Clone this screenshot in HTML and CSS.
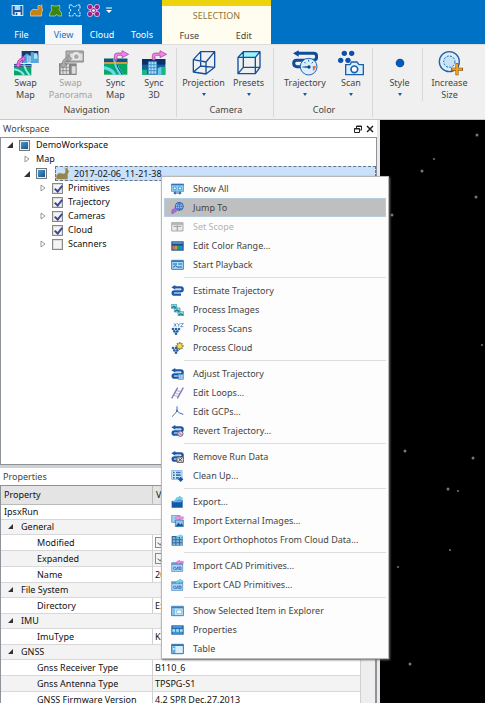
FILE: index.html
```html
<!DOCTYPE html>
<html lang="en">
<head>
<meta charset="utf-8">
<title>DemoWorkspace</title>
<link rel="stylesheet" href="styles.css">
</head>
<body>
<svg class="defs" aria-hidden="true">
  <symbol id="route" viewBox="0 0 39 36">
    <path d="M9 7H29Q35 7 35 13T29 19H10Q5 19 5 24T10 29H30" fill="none" stroke="#1c56a8" stroke-width="7"/>
    <path d="M13 0v14L1 7z" fill="#1c56a8"/>
    <path d="M12 13h16" stroke="#a9d4f3" stroke-width="3"/>
  </symbol>
  <symbol id="dots" viewBox="0 0 39 36">
    <g fill="#2d62ac"><circle cx="6" cy="18" r="4"/><circle cx="15" cy="18" r="4"/><circle cx="24" cy="18" r="4"/><circle cx="10" cy="25" r="4"/><circle cx="19" cy="25" r="4"/><circle cx="15" cy="32" r="4"/></g>
  </symbol>
  <symbol id="cad" viewBox="0 0 39 36">
    <path d="M2 8h33v27H2z" fill="#a9d4f3" stroke="#4a84bd" stroke-width="2"/>
    <path d="M2 12h33" stroke="#4a84bd" stroke-width="4"/>
    <circle cx="11" cy="25" r="4" fill="none" stroke="#2058a8" stroke-width="2"/>
    <path d="M15 30l6-10v10M25 21h5v8h-5z" fill="none" stroke="#2058a8" stroke-width="2"/>
  </symbol>
  <symbol id="tri" viewBox="0 0 6 6"><path d="M6 0v6H0z" fill="#333"/></symbol>
  <symbol id="closed" viewBox="0 0 6 8"><path d="M1 1l4 3-4 3z" fill="#fff" stroke="#999"/></symbol>
</svg>

<header class="top">
  <div class="window-tabs">
    <div class="quick">
      <button aria-label="Save"><svg viewBox="0 0 39 39"><path d="M2 3h35v33H6l-4-4z" fill="#d9eafa"/><path d="M5 6h29v27H8l-3-3z" fill="#1757a8"/><path d="M11 6h17v12H11z" fill="#a8d7f7"/><path d="M11 24h18v9H11z" fill="#eaf5ff"/><path d="M14 26h5v7h-5z" fill="#1757a8"/></svg></button>
      <button aria-label="Open run"><svg viewBox="0 0 39 39"><path d="M1 36V23l8-7 12 1 5-3-3-7 4-4 4 4 4-5 1 9 2 7-3 7v11z" fill="#c68112" stroke="#ffe0a1" stroke-width="2"/></svg></button>
      <button aria-label="Open cloud"><svg viewBox="0 0 39 39"><path d="M8 3l6 3h11l6-3 2 9-3 5 8 10v9h-10l-4-5-6 5H1l2-9 6-9-3-6z" fill="#3b8510" stroke="#c4e6ad" stroke-width="2"/></svg></button>
      <button aria-label="Trace"><svg viewBox="0 0 39 39"><path d="M4 3h8l4 5h7l4-5h9v10l-5 5 5 8v10h-10l-6-9-6 9H4V26l5-8-5-5z" fill="none" stroke="#d8f2ff" stroke-width="3" stroke-dasharray="8 2"/></svg></button>
      <button aria-label="Targets"><svg viewBox="0 0 39 39"><path d="M10 10h19v19H10z" fill="#8f267f" stroke="#f2c6ed" stroke-width="3"/><g fill="#9a208b" stroke="#f8dff5" stroke-width="2"><circle cx="9" cy="9" r="8"/><circle cx="30" cy="9" r="8"/><circle cx="9" cy="30" r="8"/><circle cx="30" cy="30" r="8"/></g><circle cx="19.500" cy="19.500" r="4" fill="#fff"/></svg></button>
      <button class="more" aria-label="More commands"><svg viewBox="0 0 6 7"><path d="M0 1h6" stroke="#fff"/><path d="M0 3h6L3 6z" fill="#fff"/></svg></button>
    </div>
    <nav class="tabs">
      <a href="#file" class="tab file">File</a><a href="#view" class="tab view active">View</a><a href="#cloud" class="tab">Cloud</a><a href="#tools" class="tab">Tools</a>
    </nav>
  </div>
  <div class="context">
    <div class="context-title">SELECTION</div>
    <nav class="tabs"><a href="#fuse" class="tab">Fuse</a><a href="#edit" class="tab">Edit</a></nav>
  </div>
</header>

<section class="ribbon">
  <div class="group first">
    <div class="commands">
      <button class="command w-m"><svg viewBox="0 0 78 78"><path d="M26 3h50v36H26z" fill="#173a70"/><path d="M28 22l14-12 11 10V7h10v15l13-8v25H28z" fill="#53a9dc"/><path d="M43 17h10v22H43zm20-7h10v16H63z" fill="#b2e2fa"/><path d="M45 21h5m-5 6h5m-5 6h5" stroke="#2866a6" stroke-width="2"/><path d="M3 42h52v34H3z" fill="#07a765"/><path d="M3 42h52v9H3z" fill="#17508f"/><path d="M3 58q22 3 30 18M33 43q3 17 17 33" stroke="#8fe4f5" stroke-width="6" fill="none"/><path d="M3 47h52" stroke="#f1a423" stroke-width="3"/><path d="M12 43q2-17 16-19v-7l10 10-10 10v-7q-7 1-8 13h6L15 53 6 43z" fill="#ed6dee" stroke="#7f2a91" stroke-width="2"/></svg><span>Swap<br>Map</span></button>
      <button class="command w-m" disabled><svg viewBox="0 0 78 78"><path d="M24 3h52v33H24z" fill="#b6b6b6" stroke="#888" stroke-width="3"/><path d="M34 9h10l4-5h13l4 5h10v24H34z" fill="#ddd" stroke="#888" stroke-width="2"/><circle cx="55" cy="20" r="9" fill="#aaa" stroke="#fff" stroke-width="3"/><path d="M3 40h53v35H3z" fill="#858585"/><path d="M8 43h25v29H8zm33 6h12v22H41z" fill="#ddd"/><path d="M15 43v29m10-29v29M8 52h25M8 62h25" stroke="#777" stroke-width="2"/><path d="M12 42q2-18 18-19v-9l11 12-11 11v-8q-8 2-9 13h7L15 54 4 42z" fill="#aaa" stroke="#777" stroke-width="2"/></svg><span>Swap<br>Panorama</span></button>
      <button class="command w-m"><svg viewBox="0 0 78 78"><path d="M3 26h70v48H3z" fill="#06a864"/><path d="M3 26h70v15H3z" fill="#174f91"/><path d="M35 26q5 29 20 47M3 53q25 5 32 21" stroke="#67d6f4" stroke-width="10" fill="none"/><path d="M37 26q5 29 20 47" stroke="#123e80" stroke-width="3" fill="none"/><path d="M3 39h70" stroke="#f2ab31" stroke-width="5"/><path d="M34 30V17q0-8 9-8h14V2l20 11-20 10v-7H46q-4 0-4 4v10z" fill="#f480ee" stroke="#8c448e" stroke-width="2"/></svg><span>Sync<br>Map</span></button>
      <button class="command w-xs"><svg viewBox="0 0 78 78"><path d="M3 27h70v47H3z" fill="#12629a"/><path d="M3 27h70v17H3z" fill="#0b2f69"/><path d="M3 59h15v15H3zm57-8h13v23H60z" fill="#19b780"/><path d="M22 35h25v37H22z" fill="#b0e2fa" stroke="#2b81c2" stroke-width="2"/><path d="M30 35v37m9-37v37M22 44h25M22 53h25M22 62h25" stroke="#4694cf" stroke-width="3"/><path d="M50 55l11-5v24H50z" fill="#68c6f0"/><path d="M34 30V17q0-8 9-8h14V2l20 11-20 10v-7H46q-4 0-4 4v10z" fill="#f480ee" stroke="#8c448e" stroke-width="2"/></svg><span>Sync<br>3D</span></button>
    </div>
    <div class="group-name">Navigation</div>
  </div>
  <div class="group">
    <div class="commands">
      <button class="command w-m"><svg viewBox="0 0 78 78"><g fill="none" stroke="#144f9c" stroke-width="4" stroke-linejoin="round"><path d="M7 29l38 7v36L7 66zM29 5h42v47L45 72M7 29L29 5v43L7 66m22-18l42 4M45 36L71 5"/></g></svg><span>Projection</span><i class="drop"></i></button>
      <button class="command w-m"><svg viewBox="0 0 78 78"><path d="M6 22L22 5h50L58 22z" fill="#9af2fb"/><g fill="none" stroke="#144f9c" stroke-width="4" stroke-linejoin="round"><path d="M6 22h52v49H6zM22 5h50v47L58 71M6 22L22 5v47L6 71m16-19h50M58 22L72 5"/></g></svg><span>Presets</span><i class="drop"></i></button>
    </div>
    <div class="group-name">Camera</div>
  </div>
  <div class="group">
    <div class="commands">
      <button class="command w-l"><svg viewBox="0 0 78 78"><path d="M15 10h50q9 0 9 10t-9 11H14q-9 0-9 9t9 10h12" fill="none" stroke="#114c99" stroke-width="9"/><path d="M20 1v19L3 10z" fill="#114c99"/><circle cx="50" cy="50" r="25" fill="#d9effc" stroke="#1d64b2" stroke-width="3"/><path d="M50 29v6m-19 16h6m25 0h8M37 36l4 4m22-4l-4 4" stroke="#1d64b2" stroke-width="3"/><path d="M51 51H37" stroke="#12447f" stroke-width="4"/><circle cx="51" cy="51" r="5" fill="#12447f"/><path d="M64 48h8l-5 13h-5z" fill="#eb6656"/></svg><span>Trajectory</span><i class="drop"></i></button>
      <button class="command w-s"><svg viewBox="0 0 78 78"><g fill="#0b50ad"><circle cx="19" cy="10" r="8"/><circle cx="41" cy="10" r="8"/><circle cx="8" cy="31" r="8"/><circle cx="30" cy="31" r="8"/></g><path d="M23 44h13l5-8h16l6 8h13v30H23z" fill="#d8effc" stroke="#1a5fac" stroke-width="4"/><circle cx="49" cy="58" r="10" fill="#fff" stroke="#1a5fac" stroke-width="5"/></svg><span>Scan</span><i class="drop"></i></button>
    </div>
    <div class="group-name">Color</div>
  </div>
  <div class="group last">
    <div class="commands">
      <button class="command w-m"><svg viewBox="0 0 78 78"><circle cx="39" cy="39" r="13" fill="#0757b7"/></svg><span>Style</span><i class="drop"></i></button>
      <button class="command w-l divided"><svg viewBox="0 0 78 78"><circle cx="37" cy="35" r="30" fill="#d9edfa" stroke="#2261a9" stroke-width="4"/><circle cx="37" cy="35" r="17" fill="#c5e2f6" stroke="#2261a9" stroke-width="3" stroke-dasharray="6 4"/><path d="M60 40v36M42 58h36" stroke="#704b1d" stroke-width="9"/><path d="M60 42v32M44 58h32" stroke="#f79b20" stroke-width="6"/></svg><span>Increase<br>Size</span></button>
    </div>
  </div>
</section>

<main class="main">
  <div class="docks">
    <section class="workspace">
      <div class="dock-title"><span>Workspace</span>
        <div class="dock-actions">
          <button aria-label="Float"><svg viewBox="0 0 8 8"><path d="M2.500 3V1h5v4H6M.5 3.500h5v4h-5zM2 1.500h6M0 4h6" fill="none" stroke="#222"/></svg></button>
          <button aria-label="Close"><svg viewBox="0 0 8 8"><path d="M1 1l6 6m0-6L1 7" stroke="#222" stroke-width="1.500"/></svg></button>
        </div>
      </div>
      <div class="tree">
        <div class="node root"><svg class="arrow open"><use href="#tri"/></svg><i class="partial"></i><span>DemoWorkspace</span></div>
        <div class="node child"><svg class="arrow"><use href="#closed"/></svg><span>Map</span></div>
        <div class="node child selected"><svg class="arrow open"><use href="#tri"/></svg><i class="partial"></i><div class="selection"><svg class="run" viewBox="0 0 42 39"><path d="M1 37V25l8-7 15 2 4-3V7l-5-6 7 4 4-5 1 7 4 7-4 6v17z" fill="#978447"/></svg><span>2017-02-06_11-21-38</span></div></div>
        <div class="node leaf"><svg class="arrow"><use href="#closed"/></svg><input id="t1" type="checkbox" checked><label for="t1">Primitives</label></div>
        <div class="node leaf"><i class="arrow"></i><input id="t2" type="checkbox" checked><label for="t2">Trajectory</label></div>
        <div class="node leaf"><svg class="arrow"><use href="#closed"/></svg><input id="t3" type="checkbox" checked><label for="t3">Cameras</label></div>
        <div class="node leaf"><i class="arrow"></i><input id="t4" type="checkbox" checked><label for="t4">Cloud</label></div>
        <div class="node leaf"><svg class="arrow"><use href="#closed"/></svg><input id="t5" type="checkbox"><label for="t5">Scanners</label></div>
      </div>
    </section>
    <section class="properties">
      <div class="dock-title"><span>Properties</span></div>
      <div class="grid-box">
        <table>
          <colgroup><col class="names"><col></colgroup>
          <thead><tr><th>Property</th><th>Value</th></tr></thead>
          <tbody>
            <tr class="section"><td colspan="2" class="kind">IpsxRun</td></tr>
            <tr class="section shade"><td colspan="2"><svg><use href="#tri"/></svg>General</td></tr>
            <tr><td>Modified</td><td><input type="checkbox" class="flag" aria-label="Modified" checked></td></tr>
            <tr class="shade"><td>Expanded</td><td><input type="checkbox" class="flag" aria-label="Expanded" checked></td></tr>
            <tr><td>Name</td><td>2017-02-06_11-21-38</td></tr>
            <tr class="section shade"><td colspan="2"><svg><use href="#tri"/></svg>File System</td></tr>
            <tr><td>Directory</td><td>E:\</td></tr>
            <tr class="section shade"><td colspan="2"><svg><use href="#tri"/></svg>IMU</td></tr>
            <tr><td>ImuType</td><td>K</td></tr>
            <tr class="section shade"><td colspan="2"><svg><use href="#tri"/></svg>GNSS</td></tr>
            <tr><td>Gnss Receiver Type</td><td>B110_6</td></tr>
            <tr class="shade"><td>Gnss Antenna Type</td><td>TPSPG-S1</td></tr>
            <tr><td>GNSS Firmware Version</td><td>4.2 SPR Dec,27,2013</td></tr>
          </tbody>
        </table>
        <div class="scroll"></div>
      </div>
    </section>
  </div>
  <svg class="scene" viewBox="0 0 105 583" preserveAspectRatio="xMinYMin slice" role="img" aria-label="Point cloud">
    <g fill="#777"><circle cx="97" cy="15" r="1.500"/><circle cx="54" cy="39" r="1"/><circle cx="42" cy="51" r="1.500"/><circle cx="96" cy="77" r="1.500"/><circle cx="12" cy="95" r="1.500"/><circle cx="102" cy="225" r="1"/><circle cx="25" cy="331" r="1.500"/><circle cx="93" cy="338" r="1.500"/><circle cx="68" cy="369" r="1.500"/><circle cx="78" cy="371" r="1"/><circle cx="70" cy="430" r="1"/><circle cx="18" cy="447" r="1"/><circle cx="30" cy="544" r="1.500"/></g>
  </svg>
</main>

<div class="menu" role="menu">
  <button role="menuitem"><svg viewBox="0 0 39 36"><path d="M1 3h37v22H1z" fill="#8ed5f8" stroke="#3474b5" stroke-width="2"/><path d="M1 5h37" stroke="#3474b5" stroke-width="4"/><path d="M7 12h8v8H7zm16 0h8v8h-8z" fill="#fff" stroke="#2a76ba" stroke-width="2"/><path d="M10 30h18" stroke="#1c5aa6" stroke-width="3"/><path d="M14 25v10l-7-5zm11 0v10l7-5z" fill="#1c5aa6"/></svg>Show All</button>
  <button role="menuitem" class="current"><svg viewBox="0 0 39 36"><circle cx="25" cy="13" r="12" fill="#b7dff8" stroke="#285cae" stroke-width="3"/><path d="M13 13h24M25 1v24M17 5q8 5 16 0M17 21q8-5 16 0M25 1q-12 12 0 24q12-12 0-24" fill="none" stroke="#285cae" stroke-width="2"/><path d="M2 35V29q0-9 9-9v-4l9 8-9 8v-5q-4 0-4 8z" fill="#a46ddd" stroke="#7044a7"/></svg>Jump To</button>
  <button role="menuitem" disabled><svg viewBox="0 0 39 36"><path d="M2 5h34v25H2z" fill="#e9e9e9" stroke="#aaa" stroke-width="3"/><path d="M2 9h34M19 13v17M8 16h23" stroke="#aaa" stroke-width="4"/></svg>Set Scope</button>
  <button role="menuitem"><svg viewBox="0 0 39 36"><path d="M1 4h37v28H1z" fill="#164c91"/><path d="M4 9h31" stroke="#8acbf3" stroke-width="3"/><path d="M4 17h7v12H4z" fill="#ed6b48"/><path d="M11 17h7v12h-7z" fill="#be9f40"/><path d="M18 17h8v12h-8z" fill="#22a568"/><path d="M26 17h9v12h-9z" fill="#278bd4"/></svg>Edit Color Range...</button>
  <button role="menuitem"><svg viewBox="0 0 39 36"><path d="M2 4h35v27H2z" fill="#a9dcf8" stroke="#3a80bd" stroke-width="3"/><path d="M2 7h35" stroke="#3477b8" stroke-width="4"/><path d="M6 15h12M22 15h11M6 25l7-5 6 4h14" fill="none" stroke="#1d5aa5" stroke-width="3"/></svg>Start Playback</button>
  <hr>
  <button role="menuitem"><svg><use href="#route"/></svg>Estimate Trajectory</button>
  <button role="menuitem"><svg viewBox="0 0 39 36"><g fill="#9cddec" stroke="#2d8eaf" stroke-width="2"><path d="M1 1h16v12H1zM10 12h17v12H10zM21 23h17v12H21z"/></g><path d="M3 11l5-4 7 4M12 22l6-4 7 4M23 33l6-4 7 4" fill="none" stroke="#167d72" stroke-width="4"/></svg>Process Images</button>
  <button role="menuitem"><svg viewBox="0 0 39 36"><use href="#dots"/><path d="M9 1l7 10m0-10L9 11M19 1l4 5 4-5m-4 5v5M29 1h8l-8 10h8" fill="none" stroke="#2864ac" stroke-width="2"/></svg>Process Scans</button>
  <button role="menuitem"><svg viewBox="0 0 39 36"><use href="#dots"/><path d="M26 0v24M14 12h24M18 4l16 16m0-16L18 20" stroke="#777743" stroke-width="4"/><circle cx="26" cy="12" r="8" fill="#ffdb50" stroke="#8c7c2c" stroke-width="2"/></svg>Process Cloud</button>
  <hr>
  <button role="menuitem"><svg viewBox="0 0 39 36"><use href="#route"/><path d="M22 19h15v15H22z" fill="#c8e7fa" stroke="#3478b5" stroke-width="2"/><path d="M22 24h15M22 29h15M29 19v15" stroke="#3478b5"/></svg>Adjust Trajectory</button>
  <button role="menuitem"><svg viewBox="0 0 39 36"><path d="M14 9l17 6M10 17l17 5M7 24l16 5" stroke="#e3b5d6" stroke-width="4"/><path d="M2 34L20 2M19 34L37 2" stroke="#7482bf" stroke-width="4"/></svg>Edit Loops...</button>
  <button role="menuitem"><svg viewBox="0 0 39 36"><path d="M18 1v12q0 5-15 19M18 14q4 8 19 11" fill="none" stroke="#396fae" stroke-width="3"/><circle cx="18" cy="14" r="3" fill="#396fae"/></svg>Edit GCPs...</button>
  <button role="menuitem"><svg viewBox="0 0 39 36"><use href="#route"/><circle cx="28" cy="26" r="8" fill="#d9d6e6" stroke="#72598c" stroke-width="3"/><path d="M24 23l8 7" stroke="#d05a7b" stroke-width="3"/></svg>Revert Trajectory...</button>
  <hr>
  <button role="menuitem"><svg viewBox="0 0 39 36"><use href="#route"/><path d="M18 18h19v16H18z" fill="#eee" stroke="#555" stroke-width="3"/><path d="M22 21l11 10m0-10L22 31" stroke="#444" stroke-width="3"/></svg>Remove Run Data</button>
  <button role="menuitem"><svg viewBox="0 0 39 36"><path d="M2 1h31v27H2z" fill="#d0e8f8" stroke="#699bcc" stroke-width="2"/><path d="M6 5h5v5H6zm0 8h5v5H6zm0 8h5v5H6zm9-16h14v5H15zm0 8h14v5H15zm0 8h9v5h-9z" fill="#3475bb"/><path d="M29 20l8 8-8 8-8-8z" fill="#1459aa"/></svg>Clean Up...</button>
  <hr>
  <button role="menuitem"><svg viewBox="0 0 39 36"><path d="M2 15h15l3-4h15v24H2z" fill="#1158a8"/><path d="M9 13h26l-5 6H4z" fill="#65b8e8"/><path d="M13 11q2-8 12-7V0l10 7-10 7v-4q-6 0-8 6z" fill="#72d8f5" stroke="#27789e"/></svg>Export...</button>
  <button role="menuitem"><svg viewBox="0 0 39 36"><path d="M2 1h25v21H2z" fill="#9ed2f2" stroke="#4883b7" stroke-width="2"/><path d="M13 15h24v20H13z" fill="#8ac5ec" stroke="#2868a5" stroke-width="2"/><path d="M14 34l8-11 6 6 4-4 5 9z" fill="#155598"/><path d="M37 5v7H23v5L11 9l12-8v4z" fill="#ee94e2" stroke="#b356a7"/></svg>Import External Images...</button>
  <button role="menuitem"><svg viewBox="0 0 39 36"><path d="M2 6h33v29H2z" fill="#326999"/><path d="M5 10h8v6H5zm11 0h8v6h-8zm11 0h6v6h-6zM5 19h8v6H5zm11 0h8v6h-8zm11 0h6v6h-6zM5 28h8v5H5zm11 0h8v5h-8zm11 0h6v5h-6z" fill="#83b8de"/><path d="M15 9q2-6 12-6V0l10 6-10 7V9z" fill="#72d8f5"/></svg>Export Orthophotos From Cloud Data...</button>
  <hr>
  <button role="menuitem"><svg viewBox="0 0 39 36"><use href="#cad"/><path d="M37 4v6H26v5L14 7l12-7v4z" fill="#e38ae4" stroke="#a050a7"/></svg>Import CAD Primitives...</button>
  <button role="menuitem"><svg viewBox="0 0 39 36"><use href="#cad"/><path d="M13 12q2-8 13-8V0l11 7-11 7v-4q-5 0-8 5z" fill="#72d8f5" stroke="#27789e"/></svg>Export CAD Primitives...</button>
  <hr>
  <button role="menuitem"><svg viewBox="0 0 39 36"><path d="M2 4h35v28H2z" fill="#c7e7fa" stroke="#3d7ebb" stroke-width="3"/><path d="M2 8h35" stroke="#3d7ebb" stroke-width="4"/><path d="M4 10h8v20H4z" fill="#7dbbe8"/><path d="M17 15h15v11H17z" fill="#eff9ff" stroke="#75add7" stroke-width="2"/></svg>Show Selected Item in Explorer</button>
  <button role="menuitem"><svg viewBox="0 0 39 36"><path d="M1 4h37v28H1z" fill="#1c62a9"/><path d="M5 9h29" stroke="#75c3f2" stroke-width="3"/><path d="M5 16h7v7H5zm11 0h7v7h-7zm11 0h7v7h-7zM5 27h29" fill="#98e2ff" stroke="#98e2ff" stroke-width="2"/></svg>Properties</button>
  <button role="menuitem"><svg viewBox="0 0 39 36"><path d="M2 4h35v28H2z" fill="#d8effd" stroke="#2e72b4" stroke-width="3"/><path d="M2 7h35" stroke="#2e72b4" stroke-width="4"/><path d="M4 10h9v20H4z" fill="#5da8df"/><path d="M6 15h5v5H6z" fill="#d8f4ff"/></svg>Table</button>
</div>
</body>
</html>
```

FILE: styles.css
```css
* { box-sizing: border-box; }
body {
  margin: 0;
  height: 100vh;
  overflow: hidden;
  display: flex;
  flex-direction: column;
  background: #f0f0f0;
  color: #111;
  font: 9px/12px "Noto Sans", "Open Sans", sans-serif;
}
button { border: 0; padding: 0; margin: 0; background: none; font: inherit; color: inherit; }
svg { display: block; }
a { color: inherit; text-decoration: none; }
.defs { width: 0; height: 0; position: absolute; }

/* Title bar and tabs */
.top { display: flex; height: 44px; flex: none; background: #0072c6; }
.window-tabs { display: flex; flex-direction: column; justify-content: space-between; width: 162px; color: #fff; }
.quick { display: flex; gap: 6px; padding: 4px 0 0 11px; align-items: center; }
.quick svg { width: 13px; height: 13px; }
.quick .more svg { width: 6px; height: 7px; }
.tabs { display: flex; height: 19px; }
.tab { flex: 1; text-align: center; line-height: 20px; }
.tab.file { flex: 0 0 45px; padding-right: 2px; }
.tab.view { flex: 0 0 37px; }
.tab.active { background: #f5f7f9; color: #1e6fb8; }
.context { width: 109px; display: flex; flex-direction: column; justify-content: space-between; border-top: 6px solid #ecd30b; background: #fffdf0; color: #444; }
.context-title { text-align: center; line-height: 20px; color: #8c7434; }

/* Ribbon */
.ribbon { display: flex; flex: none; height: 76px; padding: 3px 0 2px 3px; border-top: 1px solid #dcdcdc; border-bottom: 1px solid #c8c8c8; background: #f0f0f0; color: #444; overflow: hidden; }
.group { display: flex; flex-direction: column; justify-content: space-between; padding: 0 2px 0 4px; border-right: 1px solid #d8d8d8; }
.group.first { padding: 0 6px 0 0; }
.group.last { border: 0; }
.commands { display: flex; }
.command { display: flex; flex-direction: column; align-items: center; padding-top: 2px; }
.command svg { width: 26px; height: 26px; margin-bottom: 1px; }
.command:disabled { color: #a0a0a0; }
.w-xs { width: 32px; }
.w-s { width: 38px; }
.w-m { width: 45px; }
.w-l { width: 54px; }
.divided { border-left: 1px solid #d8d8d8; }
.drop { width: 0; margin-top: 4px; border: 2px solid transparent; border-top: 3px solid #1758a4; }
.group-name { text-align: center; line-height: 14px; }

/* Docked panels */
.main { flex: 1; min-height: 0; display: grid; grid-template-columns: 380px minmax(0, 1fr); }
.docks { min-height: 0; display: grid; grid-template-rows: minmax(0, 345fr) minmax(0, 238fr); padding-right: 3px; background: #e9e9e9; }
.workspace, .properties { display: flex; flex-direction: column; min-height: 0; background: #fff; }
.dock-title { flex: none; display: flex; justify-content: space-between; align-items: center; height: 17px; padding: 0 3px; color: #444; }
.dock-actions { display: flex; gap: 4px; }
.dock-actions svg { width: 8px; height: 8px; }
.tree { flex: 1; border: 1px solid #8e9299; }
.node { display: flex; align-items: center; height: 14px; gap: 5px; }
.arrow { width: 6px; height: 8px; flex: none; }
.arrow.open { height: 6px; }
.root { padding-left: 6px; }
.child { padding-left: 23px; gap: 6px; }
.leaf { padding-left: 39px; }
.root { gap: 6px; }
.leaf { gap: 5px; }
.partial { width: 11px; height: 11px; flex: none; border: 1px solid #777; box-shadow: inset 0 0 0 1px #eee; background: linear-gradient(135deg, #52a4d8, #0b4a86); }
.selected { height: 15px; }
.selection { flex: 1; display: flex; align-items: center; gap: 4px; height: 15px; margin-left: 2px; border: 1px dashed #667386; background: #c9e1fb; }
.run { width: 14px; height: 13px; }
.node input, .flag { appearance: none; margin: 0; width: 11px; height: 11px; border: 1px solid #888; background: #f4f4f4; }
.node input { margin-left: 1px; box-shadow: inset 0 0 0 1px #ddd; }
.node input:checked::after, .flag:checked::after { content: ""; display: block; width: 3px; height: 6px; margin: 0 0 0 3px; border: solid #3a4b9b; border-width: 0 2px 2px 0; transform: rotate(40deg); }
.flag:checked::after { border-color: #777; border-width: 0 1px 1px 0; }

/* Property grid */
.properties { border-top: 3px solid #d0d0d0; }
.grid-box { flex: 1; min-height: 0; display: flex; border: solid #8e9299; border-width: 1px 2px 0 1px; overflow: hidden; }
table { flex: 1; align-self: flex-start; table-layout: fixed; border-collapse: separate; border-spacing: 0; }
.names { width: 152px; }
th { height: 19px; padding: 0 3px; text-align: left; font-weight: normal; background: #e4e4e4; border-right: 1px solid #bbb; border-bottom: 1px solid #bbb; }
td { height: 16px; padding: 0 0 0 36px; line-height: 14px; border-bottom: 1px solid #d8d8d8; border-right: 1px solid #d0d0d0; white-space: nowrap; overflow: hidden; }
td + td { padding-left: 2px; }
.section td { height: 15px; padding-left: 20px; }
.section .kind { padding-left: 3px; }
.section svg { float: left; width: 5px; height: 5px; margin: 4px 0 0 -13px; }
.shade { background: #f3f3f3; }
.flag { display: block; }
.scroll { width: 14px; background: #eee; }

/* Point cloud view */
.scene { width: 100%; height: 100%; background: #000; }

/* Context menu */
.menu { position: absolute; left: 161px; top: 176px; width: 228px; padding: 2px 2px 0; border: 1px solid #b8b8b8; background: #fdfdfd; box-shadow: 1px 1px 2px #666; color: #444; }
.menu button { display: flex; align-items: center; gap: 9px; width: 100%; height: 19px; padding-left: 6px; border: 1px solid transparent; text-align: left; white-space: nowrap; }
.menu button:disabled { color: #b4b4b4; }
.menu .current { background: #bfbfbf; border-color: #b5cde0; }
.menu svg { width: 13px; height: 12px; flex: none; }
.menu hr { height: 1px; margin: 3px 0 3px 20px; border: 0; background: #dedede; }
```
